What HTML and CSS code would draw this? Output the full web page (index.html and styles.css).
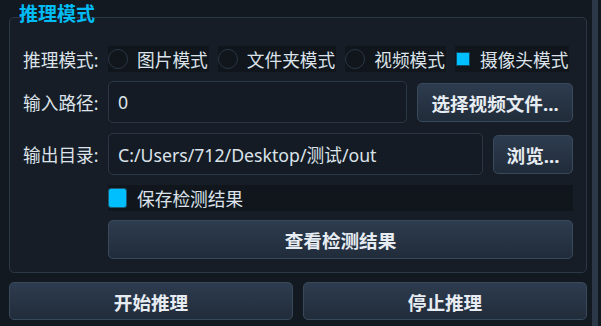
FILE: index.html
```html
<!DOCTYPE html>
<html lang="zh">
<head>
<meta charset="utf-8">
<link rel="stylesheet" href="styles.css">
</head>
<body>
<div class="app">
  <div class="main">
    <div class="group">
      <div class="group-title">推理模式</div>
      <div class="row mode-row">
        <span class="label">推理模式:</span>
        <div class="radios">
          <label class="radio"><span class="dot"></span><span>图片模式</span></label>
          <label class="radio"><span class="dot"></span><span>文件夹模式</span></label>
          <label class="radio"><span class="dot"></span><span>视频模式</span></label>
          <label class="radio checked"><span class="dot"></span><span>摄像头模式</span></label>
        </div>
      </div>
      <div class="row field-row">
        <span class="label">输入路径:</span>
        <div class="input">0</div>
        <button class="btn btn-select">选择视频文件...</button>
      </div>
      <div class="row field-row">
        <span class="label">输出目录:</span>
        <div class="input">C:/Users/712/Desktop/测试/out</div>
        <button class="btn btn-browse">浏览...</button>
      </div>
      <div class="row check-row">
        <span class="label"></span>
        <label class="check"><span class="box"></span><span>保存检测结果</span></label>
      </div>
      <div class="row view-row">
        <span class="label"></span>
        <button class="btn btn-wide">查看检测结果</button>
      </div>
    </div>
    <div class="actions">
      <button class="btn btn-action">开始推理</button>
      <button class="btn btn-action">停止推理</button>
    </div>
  </div>
  <div class="scrollbar"></div>
</div>
</body>
</html>
```

FILE: styles.css
```css
* { box-sizing: border-box; }
html, body {
  margin: 0;
  padding: 0;
  background: #131920;
  width: 601px;
  height: 326px;
  overflow: hidden;
}
body {
  font-family: "Noto Sans", "Noto Sans CJK SC", sans-serif;
  font-size: 17.7px;
  color: #dce3ea;
}
.app {
  display: flex;
  height: 326px;
}
.main {
  width: 592px;
  padding: 17px 0 0 9px;
}
.scrollbar {
  width: 6px;
  background: #2b3848;
  height: 326px;
}
.group {
  position: relative;
  width: 578px;
  height: 256px;
  border: 1px solid #2c3745;
  border-radius: 5px;
  background: #171d26;
  padding: 28px 13px 0 13px;
}
.group-title {
  position: absolute;
  left: 9px;
  top: -16px;
  font-size: 19px;
  font-weight: bold;
  color: #00bcf5;
  line-height: 24px;
}
.row {
  display: flex;
  align-items: center;
}
.label {
  width: 85px;
  flex: none;
  white-space: nowrap;
}
.mode-row { height: 26px; }
.radios {
  display: flex;
  gap: 9px;
}
.radio {
  display: flex;
  align-items: center;
  gap: 9px;
  height: 26px;
  background: #11161d;
  padding-right: 1px;
  white-space: nowrap;
}
.radio .dot {
  width: 20px;
  height: 20px;
  border-radius: 50%;
  border: 1.5px solid #2b3644;
  flex: none;
}
.radio.checked .dot {
  width: 16px;
  border: none;
  border-radius: 0;
  display: flex;
  align-items: center;
  justify-content: center;
}
.radio.checked .dot::after {
  content: "";
  width: 12px;
  height: 12px;
  background: #00bfff;
  border: 1px solid #0a4a63;
}
.field-row {
  height: 42px;
  margin-top: 9px;
  gap: 10px;
}
.field-row + .field-row { margin-top: 10px; }
.field-row .label { width: 75px; }
.input {
  flex: 1;
  height: 42px;
  border: 1px solid #2b3645;
  border-radius: 5px;
  background: #151b24;
  padding: 0 9px;
  display: flex;
  align-items: center;
  white-space: nowrap;
}
.btn {
  font-family: "Noto Sans", "Noto Sans CJK SC", sans-serif;
  font-size: 18.6px;
  font-weight: bold;
  color: #e6ecf2;
  background: linear-gradient(#2d3c4f, #212c3a);
  border: 1px solid #39495c;
  border-radius: 5px;
  padding: 0;
  cursor: pointer;
}
.btn-select { width: 156px; height: 39px; }
.btn-browse { width: 80px; height: 39px; }
.check-row {
  height: 26px;
  margin-top: 10px;
}
.check {
  flex: 1;
  height: 26px;
  background: #11161d;
  display: flex;
  align-items: center;
  gap: 10px;
}
.check .box {
  width: 19px;
  height: 20px;
  background: #00bfff;
  border: 1px solid #1a5b78;
  border-radius: 3px;
  flex: none;
}
.view-row { margin-top: 9px; }
.btn-wide {
  flex: 1;
  height: 39px;
}
.actions {
  display: flex;
  gap: 10px;
  margin-top: 9px;
  width: 578px;
}
.btn-action {
  flex: 1;
  height: 38px;
}
```
